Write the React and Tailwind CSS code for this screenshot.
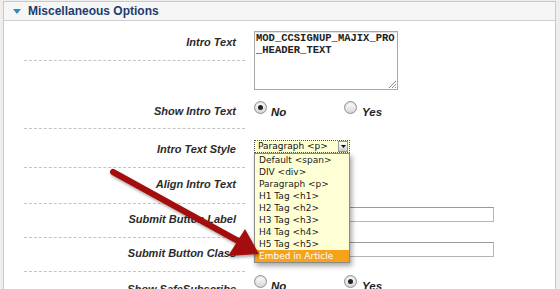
import React from 'react';

const labelFont = "font-['Liberation_Sans',Arial,sans-serif]";
const menuFont = "font-['DejaVu_Sans',Verdana,sans-serif]";

const Radio = ({ checked }) => (
  <span className="w-[13px] h-[13px] rounded-full border border-[#8f8f8f] bg-gradient-to-b from-white to-[#d6d6d6] shadow-[inset_0_1px_1px_rgba(0,0,0,0.15)] flex items-center justify-center shrink-0">
    {checked && <span className="w-[5px] h-[5px] rounded-full bg-[#222]" />}
  </span>
);

const RadioPair = ({ value }) => (
  <div className="flex items-start">
    <div className="flex items-start w-[90px]">
      <Radio checked={value === 'no'} />
      <span className="ml-[4px] mt-[5px] text-[11.5px] leading-[13px] font-bold italic text-[#222]">No</span>
    </div>
    <div className="flex items-start">
      <Radio checked={value === 'yes'} />
      <span className="ml-[5px] mt-[5px] text-[11.5px] leading-[13px] font-bold italic text-[#222]">Yes</span>
    </div>
  </div>
);

const Row = ({ label, height, labelClass, contentClass, children }) => (
  <div className={`flex ${height}`}>
    <div
      className={`ml-[20px] w-[221px] h-full border-b border-dashed border-[#c4c4c4] flex items-center justify-end pr-[9px] text-[11px] font-bold italic text-[#2b2b2b] ${labelClass}`}
    >
      {label}
    </div>
    <div className={`ml-[9px] ${contentClass}`}>{children}</div>
  </div>
);

const options = [
  'Default <span>',
  'DIV <div>',
  'Paragraph <p>',
  'H1 Tag <h1>',
  'H2 Tag <h2>',
  'H3 Tag <h3>',
  'H4 Tag <h4>',
  'H5 Tag <h5>',
];

export default function App() {
  return (
    <div className={`relative w-[560px] h-[289px] overflow-hidden bg-[#eeeeee] ${labelFont}`}>
      <div className="ml-[3px] mt-[1px] w-[553px] h-[300px] border border-[#c9c9c9] bg-white">
        {/* Header */}
        <div className="h-[19px] bg-[#f6f6f6] border-b border-[#cfcfcf] flex items-center pl-[9px]">
          <svg width="8" height="5" viewBox="0 0 8 5" className="mr-[7px]">
            <polygon points="0,0 8,0 4,5" fill="#2e8cc4" />
          </svg>
          <span className="text-[12px] font-bold text-[#1d3c6e] leading-none">Miscellaneous Options</span>
        </div>

        <Row label="Intro Text" height="h-[73px]" labelClass="!h-[40px] pt-[3px]" contentClass="pt-[10px]">
          <div className="relative w-[144px] h-[59px] border border-[#a9a9a9] bg-white shadow-[inset_0_1px_1px_rgba(0,0,0,0.12)] pl-[1px] pt-[1px] font-['Liberation_Mono',monospace] font-bold text-[10.5px] leading-[11.5px] text-[#222] whitespace-pre">
            {'MOD_CCSIGNUP_MAJIX_PRO\n_HEADER_TEXT'}
            <svg width="8" height="8" viewBox="0 0 8 8" className="absolute right-[1px] bottom-[1px]">
              <path d="M1 8 L8 1 M4 8 L8 4 M7 8 L8 7" stroke="#8a8a8a" strokeWidth="1" />
            </svg>
          </div>
        </Row>

        <Row label="Show Intro Text" height="h-[35px]" contentClass="pt-[7px]">
          <RadioPair value="no" />
        </Row>

        <Row label="Intro Text Style" height="h-[39px]" labelClass="pt-[3px]" contentClass="pt-[11px]">
          <div className={`w-[96px] h-[13px] flex items-center bg-[#ffffd4] border border-dotted border-[#555] ${menuFont}`}>
            <span className="pl-[3px] text-[9px] leading-[11px] text-[#111] flex-1">Paragraph &lt;p&gt;</span>
            <span className="w-[10px] h-[11px] mr-[1px] bg-gradient-to-b from-white to-[#cfcfcf] border border-[#999] flex items-center justify-center">
              <svg width="5" height="3" viewBox="0 0 5 3">
                <polygon points="0,0 5,0 2.5,3" fill="#111" />
              </svg>
            </span>
          </div>
        </Row>

        <Row label="Align Intro Text" height="h-[36px]" labelClass="pb-[2px]" contentClass="pt-[8px]" />

        <Row label="Submit Button Label" height="h-[34px]" labelClass="pb-[2px]" contentClass="pt-[3px]">
          <div className="w-[240px] h-[15px] border border-[#b5b5b5] border-t-[#9a9a9a] bg-white" />
        </Row>

        <Row label="Submit Button Class" height="h-[34px]" labelClass="pb-[2px]" contentClass="pt-[4px]">
          <div className="w-[240px] h-[15px] border border-[#b5b5b5] border-t-[#9a9a9a] bg-white" />
        </Row>

        <Row label="Show SafeSubscribe" height="h-[34px]" labelClass="pt-[2px]" contentClass="pt-[3px]">
          <RadioPair value="yes" />
        </Row>
      </div>

      {/* Open select list */}
      <div
        className={`absolute left-[254px] top-[153px] w-[96px] bg-[#ffffd6] border border-[#8a8a8a] shadow-[2px_3px_5px_rgba(0,0,0,0.35)] ${menuFont}`}
      >
        {options.map((o) => (
          <div key={o} className="h-[12px] pl-[4px] text-[9px] leading-[12px] text-[#1a1a1a] whitespace-nowrap">
            {o}
          </div>
        ))}
        <div className="h-[12px] pl-[4px] text-[9px] leading-[12px] text-white bg-[#f7a21b] whitespace-nowrap">
          Embed in Article
        </div>
      </div>

      {/* Red callout arrow */}
      <svg className="absolute left-0 top-0 pointer-events-none" width="560" height="289" viewBox="0 0 560 289">
        <defs>
          <filter id="sh" x="-10%" y="-10%" width="130%" height="130%">
            <feDropShadow dx="1" dy="2" stdDeviation="1.5" floodColor="#000" floodOpacity="0.35" />
          </filter>
        </defs>
        <g filter="url(#sh)">
          <line x1="113" y1="172" x2="240" y2="242" stroke="#a30c0c" strokeWidth="6" strokeLinecap="round" />
          <polygon points="259,254 228,256 245,229" fill="#a30c0c" />
        </g>
      </svg>
    </div>
  );
}
